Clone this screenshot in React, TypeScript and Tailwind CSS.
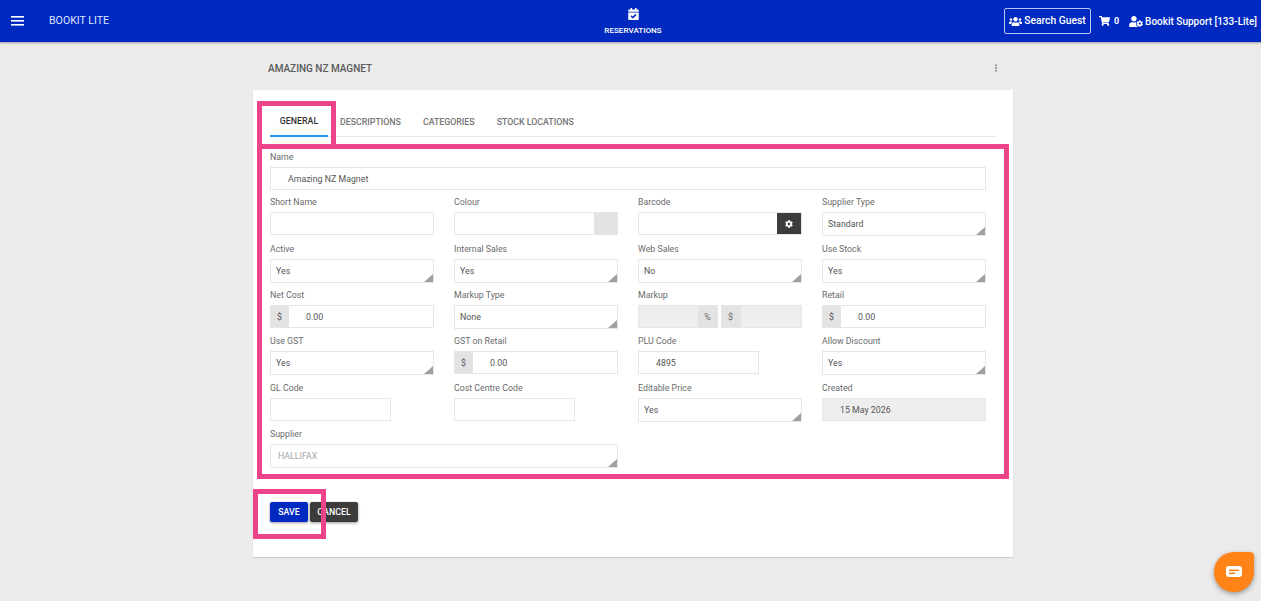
import React from 'react';
import { FaCalendarCheck, FaCog, FaEllipsisV, FaShoppingCart, FaUserCog, FaUsers } from 'react-icons/fa';

const Label = ({ children }: { children: React.ReactNode }) => (
  <div className="h-[15px] text-[8.8px] leading-[11.6px] text-[#6b6b6b]">{children}</div>
);

const Input = ({ label, value, width = 'w-full' }: { label: string; value?: string; width?: string }) => (
  <div>
    <Label>{label}</Label>
    <div className={`${width} h-[23px] border border-[#e6e6e6] bg-white pl-[17px] text-[8.8px] leading-[22px] text-[#555]`}>{value}</div>
  </div>
);

const Select = ({ label, value, muted = false }: { label: string; value: string; muted?: boolean }) => (
  <div>
    <Label>{label}</Label>
    <div className={`relative h-[24px] border border-[#e6e6e6] bg-white text-[8.8px] leading-[23px] ${muted ? 'pl-[7px] text-[#a5a5a5]' : 'pl-[5px] text-[#555]'}`}>
      {value}
      <svg className="absolute bottom-0 right-0" width="9" height="8" viewBox="0 0 9 8">
        <path d="M9 0V8H0Z" fill="#a0a0a0" />
      </svg>
    </div>
  </div>
);

const Money = ({ label, value }: { label: string; value: string }) => (
  <div>
    <Label>{label}</Label>
    <div className="flex h-[23px] border border-[#e6e6e6] bg-white text-[8.8px] leading-[22px] text-[#555]">
      <span className="w-[18px] bg-[#e3e3e3] pl-[6px]">$</span>
      <span className="pl-[17px]">{value}</span>
    </div>
  </div>
);

const Tab = ({ children, active = false }: { children: React.ReactNode; active?: boolean }) => (
  <div className={`flex h-[30px] items-center pt-[2px] text-[8.8px] font-medium ${active ? 'w-[58px] justify-center border-b-2 border-[#2196f3] text-[#333]' : 'text-[#757575]'}`}>
    {children}
  </div>
);

export default function App() {
  return (
    <div className="relative h-[601px] overflow-hidden bg-[#ebebeb] font-['Roboto',sans-serif]">
      <header className="flex h-[42px] items-center bg-[#0029bf] text-white shadow-[0_1px_2px_rgba(0,0,0,0.35)]">
        <div className="flex w-[604px] items-center pl-[11px]">
          <svg width="13" height="10" viewBox="0 0 13 10" fill="#fff">
            <rect y="0" width="13" height="1.6" />
            <rect y="4" width="13" height="1.6" />
            <rect y="8" width="13" height="1.6" />
          </svg>
          <span className="ml-[25px] text-[10.6px] text-[#dfe6ff]">BOOKIT LITE</span>
        </div>
        <div className="flex w-[58px] flex-col items-center">
          <FaCalendarCheck className="mt-[1px] h-[12px] w-[11px]" />
          <span className="mt-[5px] whitespace-nowrap text-[8.1px] leading-[11px] font-medium">RESERVATIONS</span>
        </div>
        <div className="flex flex-1 items-center justify-end pr-[4px] text-[10px] font-medium">
          <div className="flex h-[26px] w-[87px] items-center justify-center gap-[2px] rounded-[2px] border border-[#b9c6f5]">
            <FaUsers className="h-[11px] w-[13px]" />
            <span className="text-[10.3px]">Search Guest</span>
          </div>
          <FaShoppingCart className="ml-[8px] h-[10px] w-[11px]" />
          <span className="ml-[4px] mt-[1px] text-[9px] font-bold">0</span>
          <FaUserCog className="ml-[10px] h-[11px] w-[14px]" />
          <span className="ml-[2px]">Bookit Support [133-Lite]</span>
        </div>
      </header>

      <div className="ml-[253px] w-[760px]">
        <div className="flex h-[48px] items-center justify-between pl-[15px] pr-[13px] pt-[4px] text-[10px] font-medium text-[#5a5a5a]">
          <span>AMAZING NZ MAGNET</span>
          <FaEllipsisV className="h-[8px] w-[8px] text-[#999]" />
        </div>

        <main className="h-[467px] bg-white pl-[17px] pr-[17px] shadow-[0_1px_1px_rgba(0,0,0,0.12)]">
          <div className="pt-[17px]">
            <div className="flex h-[30px] gap-[22px] border-b border-[#eaeaea]">
              <div className="-mr-[10px]">
                <Tab active>GENERAL</Tab>
              </div>
              <Tab>DESCRIPTIONS</Tab>
              <Tab>CATEGORIES</Tab>
              <Tab>STOCK LOCATIONS</Tab>
            </div>
          </div>

          <div className="w-[716px] pt-[15px]">
            <div className="h-[45.4px]">
              <Input label="Name" value="Amazing NZ Magnet" />
            </div>
            <div className="grid grid-cols-[164px_164px_164px_164px] auto-rows-[46.33px] gap-x-5">
              <Input label="Short Name" />
              <div>
                <Label>Colour</Label>
                <div className="flex h-[23px] justify-end border border-[#e6e6e6] bg-white">
                  <span className="w-[23px] bg-[#e3e3e3]" />
                </div>
              </div>
              <div>
                <Label>Barcode</Label>
                <div className="flex h-[23px] justify-end border border-[#e6e6e6] bg-white">
                  <span className="flex w-[24px] items-center justify-center bg-[#3c3c3c] text-white">
                    <FaCog className="h-[8px] w-[8px]" />
                  </span>
                </div>
              </div>
              <Select label="Supplier Type" value="Standard" />

              <Select label="Active" value="Yes" />
              <Select label="Internal Sales" value="Yes" />
              <Select label="Web Sales" value="No" />
              <Select label="Use Stock" value="Yes" />

              <Money label="Net Cost" value="0.00" />
              <Select label="Markup Type" value="None" />
              <div>
                <Label>Markup</Label>
                <div className="flex h-[23px] gap-[3px] text-[8.8px] leading-[22px] text-[#666]">
                  <div className="flex w-[80px] justify-end border border-[#e6e6e6] bg-[#eeeeee]">
                    <span className="w-[19px] bg-[#e3e3e3] text-center">%</span>
                  </div>
                  <div className="flex flex-1 border border-[#e6e6e6] bg-[#eeeeee]">
                    <span className="w-[19px] bg-[#e3e3e3] pl-[6px]">$</span>
                  </div>
                </div>
              </div>
              <Money label="Retail" value="0.00" />

              <Select label="Use GST" value="Yes" />
              <Money label="GST on Retail" value="0.00" />
              <Input label="PLU Code" value="4895" width="w-[121px]" />
              <Select label="Allow Discount" value="Yes" />

              <Input label="GL Code" width="w-[121px]" />
              <Input label="Cost Centre Code" width="w-[121px]" />
              <Select label="Editable Price" value="Yes" />
              <div>
                <Label>Created</Label>
                <div className="h-[23px] border border-[#e6e6e6] bg-[#eeeeee] pl-[17px] text-[8.8px] leading-[22px] text-[#555]">15 May 2026</div>
              </div>

              <div className="col-span-2">
                <Select label="Supplier" value="HALLIFAX" muted />
              </div>
            </div>
          </div>

          <div className="mt-[27px] flex gap-[2px] text-[8.8px] font-medium text-white">
            <button className="h-[20px] w-[38px] rounded-[2px] bg-[#0029bf] shadow-[0_1px_3px_rgba(0,0,0,0.4)]">SAVE</button>
            <button className="h-[20px] w-[48px] rounded-[2px] bg-[#3c3c3c] shadow-[0_1px_3px_rgba(0,0,0,0.4)]">CANCEL</button>
          </div>
        </main>
      </div>

      {/* pink highlight boxes drawn over the form */}
      <div className="absolute left-[257px] top-[101px] h-[48px] w-[79px] border-[5px] border-b-0 border-[#ec4488]" />
      <div className="absolute left-[257px] top-[144px] h-[335px] w-[752px] border-[5px] border-[#ec4488]" />
      <div className="absolute left-[253px] top-[489px] h-[50px] w-[73px] border-[5px] border-[#ec4488]" />

      <div className="absolute left-[1214px] top-[552px] flex h-[40px] w-[40px] items-center justify-center rounded-[20px] rounded-tr-[4px] bg-[#ff8317] shadow-[0_2px_5px_rgba(0,0,0,0.35)]">
        <svg width="16" height="12" viewBox="0 0 16 12">
          <path d="M3 0H13A3 3 0 0 1 16 3V8A3 3 0 0 1 13 11H3A3 3 0 0 1 0 8V3A3 3 0 0 1 3 0Z" fill="#fff" />
          <rect x="3" y="3.5" width="10" height="1.6" fill="#ff8317" />
          <rect x="3" y="6.5" width="6" height="1.6" fill="#ff8317" />
        </svg>
      </div>
    </div>
  );
}
